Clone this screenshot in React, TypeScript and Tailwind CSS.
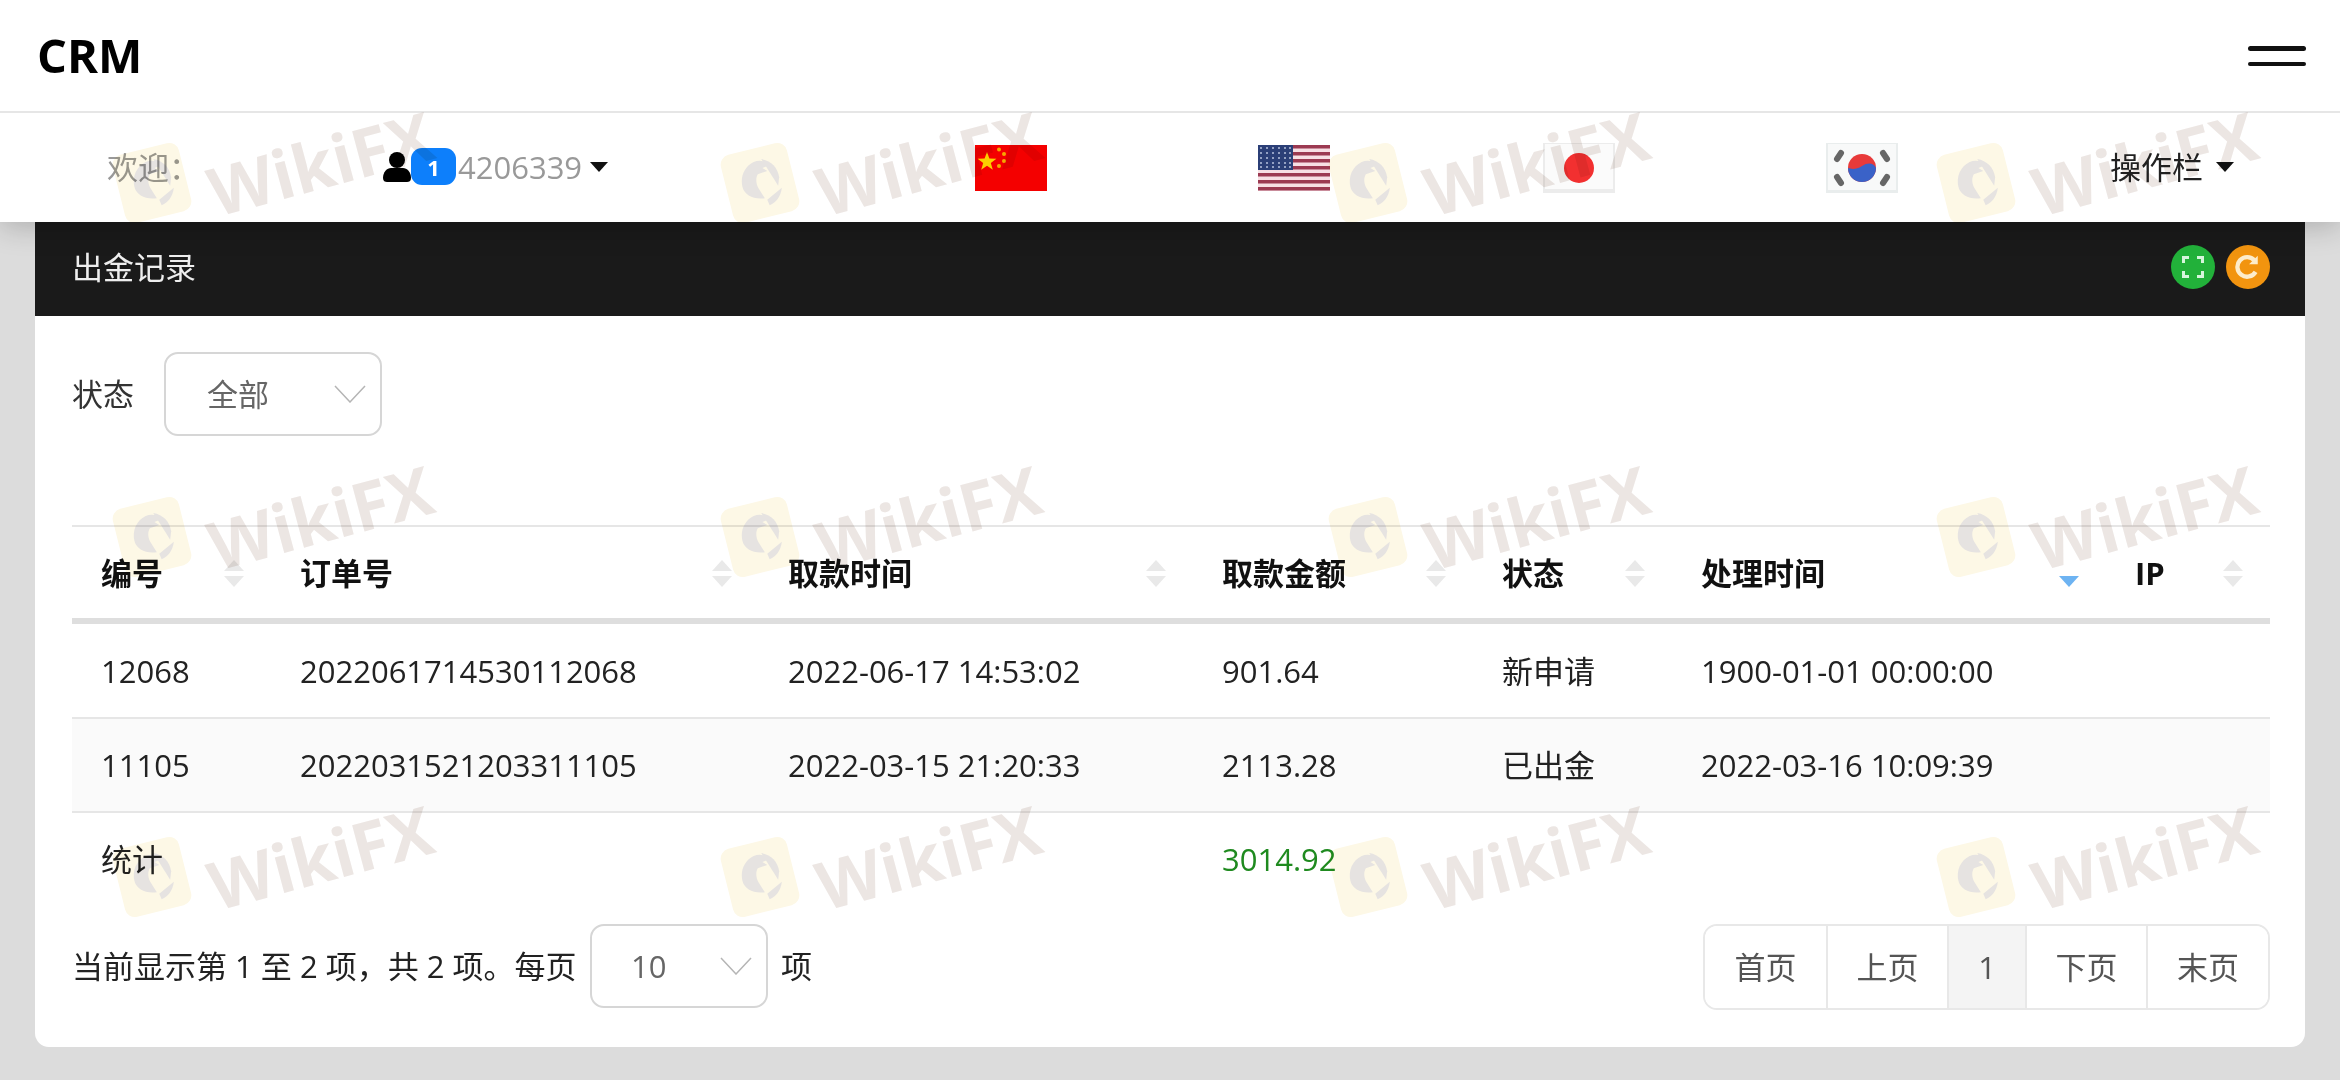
import React from "react";

const COLUMNS = [
  { label: "编号", width: "w-[199px]" },
  { label: "订单号", width: "w-[488px]" },
  { label: "取款时间", width: "w-[434px]" },
  { label: "取款金额", width: "w-[280px]" },
  { label: "状态", width: "w-[199px]" },
  { label: "处理时间", width: "w-[434px]", sorted: true },
  { label: "IP", width: "w-[164px]" },
];

const ROWS = [
  ["12068", "2022061714530112068", "2022-06-17 14:53:02", "901.64", "新申请", "1900-01-01 00:00:00", ""],
  ["11105", "2022031521203311105", "2022-03-15 21:20:33", "2113.28", "已出金", "2022-03-16 10:09:39", ""],
];

const PAGES = [
  { label: "首页", width: "w-[121px]" },
  { label: "上页", width: "w-[121px]" },
  { label: "1", width: "w-[78px]", active: true },
  { label: "下页", width: "w-[121px]" },
  { label: "末页", width: "w-[122px]" },
];

function Caret() {
  return (
    <svg viewBox="0 0 18 10" className="h-[10px] w-[18px] shrink-0">
      <path d="M0 0h18L9 10z" fill="#111" />
    </svg>
  );
}

function Chevron() {
  return (
    <svg viewBox="0 0 32 18" className="h-[18px] w-[32px] shrink-0" fill="none" stroke="#b5b5b5" strokeWidth="1.500">
      <path d="M1 1l15 16L31 1" />
    </svg>
  );
}

function SortArrows({ sorted }: { sorted?: boolean }) {
  return (
    <svg viewBox="0 0 20 27" className="mt-[1px] h-[27px] w-[20px] shrink-0">
      {!sorted && <path d="M10 0l10 11H0z" fill="#e9e9e9" />}
      <path d="M0 16h20L10 27z" fill={sorted ? "#6db3f2" : "#e9e9e9"} />
    </svg>
  );
}

function FlagChina() {
  return (
    <svg viewBox="0 0 72 46" className="h-[46px] w-[72px]">
      <rect width="72" height="46" fill="#f40000" />
      <path d="M12 7l2.400 6.600 7 .2-5.600 4.200 2 6.800-5.800-4-5.800 4 2-6.800-5.600-4.200 7-.2z" fill="#fbd000" />
      <circle cx="24" cy="4.500" r="2" fill="#f6a800" />
      <circle cx="29" cy="9" r="2" fill="#f6a800" />
      <circle cx="29" cy="16" r="2" fill="#f6a800" />
      <circle cx="24" cy="21" r="2" fill="#f6a800" />
    </svg>
  );
}

function FlagUs() {
  const stripes = [0, 7, 14, 21, 28, 35, 42];
  return (
    <svg viewBox="0 0 72 46" className="h-[46px] w-[72px]">
      <rect width="72" height="46" fill="#f7dfe4" />
      {stripes.map((y) => (
        <rect key={y} y={y} width="72" height="3.500" fill="#9c3a52" />
      ))}
      <rect width="35" height="25" fill="#2b3f77" />
      {[3, 8, 13, 18, 22].map((y) =>
        [3, 9, 15, 21, 27, 32].map((x) => <circle key={`${x}-${y}`} cx={x} cy={y} r="1" fill="#b9c3dd" />)
      )}
    </svg>
  );
}

function FlagJapan() {
  return (
    <svg viewBox="0 0 72 50" className="h-[50px] w-[72px]">
      <rect width="72" height="50" fill="#ececec" />
      <rect x="2" y="1" width="68" height="45" fill="#fbfbfb" />
      <circle cx="36" cy="25" r="15" fill="#f23030" />
    </svg>
  );
}

function FlagKorea() {
  return (
    <svg viewBox="0 0 72 50" className="h-[50px] w-[72px]">
      <rect width="72" height="50" fill="#e9eded" />
      <rect x="2" y="1" width="68" height="46" fill="#f8f9f9" />
      <circle cx="36" cy="25" r="14" fill="#e83a3a" />
      <path d="M22 25a14 14 0 0 0 28 0c-2-5-8-6-14-2s-11 3-14 2z" fill="#3a62c8" />
      <g stroke="#666" strokeWidth="6" strokeLinecap="round">
        <path d="M15 10l-4 6" />
        <path d="M57 10l4 6" />
        <path d="M15 40l-4-6" />
        <path d="M57 40l4-6" />
      </g>
    </svg>
  );
}

function WatermarkLogo() {
  return (
    <svg viewBox="0 0 80 84" className="h-[84px] w-[80px] shrink-0">
      <g transform="rotate(-14 40 42)">
        <rect x="6" y="7" width="68" height="70" rx="10" fill="#fdf8e6" />
        <path d="M22 42c0-11 7-20 17-22 7-1 13 3 15 7l-8 1 4 4-10 1c-3 3-4 8-3 13l4 12c-11-1-19-8-19-16z" fill="#e6e3e1" />
        <path d="M47 19c9 4 14 12 13 22l-3 8-8-24z" fill="#e6e3e1" />
        <path d="M43 60l17-8c-3 8-9 13-16 14z" fill="#e6e3e1" />
      </g>
    </svg>
  );
}

function Watermark() {
  return (
    <div className="flex items-start gap-[18px]">
      <WatermarkLogo />
      <span className="origin-left translate-y-[18px] -rotate-[15deg] text-[67px] leading-none font-bold text-[#ece6e3]">
        WikiFX
      </span>
    </div>
  );
}

function WatermarkLayer() {
  const marks = Array.from({ length: 12 }, (_, i) => i);
  return (
    <div className="pointer-events-none absolute inset-0 z-20 mix-blend-multiply">
      <div className="grid grid-cols-[repeat(4,608px)] grid-rows-[354px_340px_100px] pt-[141px] pl-[112px]">
        {marks.map((i) => (
          <Watermark key={i} />
        ))}
      </div>
    </div>
  );
}

function SelectBox({ value, className }: { value: string; className: string }) {
  return (
    <div className={`flex items-center justify-between rounded-[14px] border-2 border-[#d6d6d6] bg-white text-[#666] ${className}`}>
      <span>{value}</span>
      <Chevron />
    </div>
  );
}

export default function App() {
  return (
    <div className="relative h-[1080px] w-[2340px] overflow-hidden bg-[#dcdcdc] font-['Open_Sans','Noto_Sans_CJK_SC',sans-serif] text-[31px] leading-[40px] text-[#222]">
      {/* top bar */}
      <header className="relative z-[15] flex h-[113px] items-center justify-between border-b-2 border-[#e6e6e6] bg-white pr-[34px] pl-[37px]">
        <span className="text-[47px] leading-none font-bold text-black">CRM</span>
        <div className="flex w-[58px] flex-col gap-[11px]">
          <span className="h-[5px] rounded-full bg-[#111]" />
          <span className="h-[4px] rounded-full bg-[#111]" />
        </div>
      </header>

      {/* welcome bar */}
      <div className="relative z-10 grid h-[109px] grid-cols-[276px_592px_283px_285px_283px_284px_1fr] items-center bg-white pl-[107px] shadow-[0_4px_28px_rgba(0,0,0,0.22)]">
        <span className="-mt-[2px] text-[#999]">欢迎：</span>
        <div className="-mt-[2px] flex items-center">
          <svg viewBox="0 0 28 30" className="h-[30px] w-[28px] shrink-0">
            <circle cx="14" cy="8" r="8" fill="#000" />
            <path d="M0 26c0-6 4-10 8-10h12c4 0 8 4 8 10 0 3-2 4-4 4H4c-2 0-4-1-4-4z" fill="#000" />
          </svg>
          <span className="flex h-[37px] w-[45px] shrink-0 items-center justify-center rounded-[11px] bg-[#0d7ffb] text-[22px] font-bold text-white">
            1
          </span>
          <span className="ml-[2px] text-[#999]">4206339</span>
          <span className="ml-[8px]">
            <Caret />
          </span>
        </div>
        <FlagChina />
        <FlagUs />
        <FlagJapan />
        <FlagKorea />
        <div className="-mt-[2px] flex items-center gap-[13px] text-[#222]">
          <span>操作栏</span>
          <Caret />
        </div>
      </div>

      {/* card */}
      <main className="mx-[35px] overflow-hidden rounded-b-[14px] bg-white">
        <div className="flex h-[94px] items-center justify-between bg-[#1a1a1a] pr-[35px] pb-[4px] pl-[37px]">
          <span className="text-[#eee]">出金记录</span>
          <div className="flex items-center gap-[11px]">
            <span className="flex h-[44px] w-[44px] items-center justify-center rounded-full bg-[#22b13a]">
              <svg viewBox="0 0 22 22" className="h-[22px] w-[22px]" fill="none" stroke="#d6f5dc" strokeWidth="3">
                <path d="M1.500 7V1.500H7M15 1.500h5.500V7M20.500 15v5.500H15M7 20.500H1.500V15" />
              </svg>
            </span>
            <span className="flex h-[44px] w-[44px] items-center justify-center rounded-full bg-[#f2940f]">
              <svg viewBox="0 0 24 24" className="h-[26px] w-[26px]" fill="none" stroke="#fdeccb" strokeWidth="4">
                <path d="M19 16.500A9 9 0 1 1 18 6" />
                <path d="M21 1.500v8h-8z" fill="#fdeccb" stroke="none" />
              </svg>
            </span>
          </div>
        </div>

        <div className="pr-[35px] pl-[37px]">
          {/* filter */}
          <div className="flex h-[209px] items-start gap-[30px] pt-[36px]">
            <span className="mt-[22px] text-[#333]">状态</span>
            <SelectBox value="全部" className="h-[84px] w-[218px] pr-[14px] pl-[41px]" />
          </div>

          {/* table */}
          <table className="w-full table-fixed border-separate border-spacing-0">
            <colgroup>
              {COLUMNS.map((c) => (
                <col key={c.label} className={c.width} />
              ))}
            </colgroup>
            <thead>
              <tr>
                {COLUMNS.map((c) => (
                  <th key={c.label} className="h-[99px] border-t-2 border-b-[6px] border-t-[#e6e6e6] border-b-[#dedede] p-0 text-left font-bold text-[#111]">
                    <div className="flex items-center justify-between pr-[27px] pl-[29px]">
                      <span>{c.label}</span>
                      <SortArrows sorted={c.sorted} />
                    </div>
                  </th>
                ))}
              </tr>
            </thead>
            <tbody>
              {ROWS.map((row, i) => (
                <tr key={row[0]} className={i === 1 ? "bg-[#fafafa]" : ""}>
                  {row.map((cell, j) => (
                    <td key={j} className={`border-b-2 border-[#e6e6e6] p-0 pl-[29px] ${i === 0 ? "h-[95px]" : "h-[94px]"}`}>
                      {cell}
                    </td>
                  ))}
                </tr>
              ))}
              <tr>
                <td className="h-[92px] p-0 pl-[29px]">统计</td>
                <td className="p-0" />
                <td className="p-0" />
                <td className="p-0 pl-[29px] text-[#1f8a1f]">3014.92</td>
                <td className="p-0" />
                <td className="p-0" />
                <td className="p-0" />
              </tr>
            </tbody>
          </table>

          {/* footer */}
          <div className="mt-[19px] flex items-start justify-between pb-[37px]">
            <div className="flex h-[84px] items-center whitespace-pre text-[#222]">
              <span className="w-[518px]">当前显示第 1 至 2 项，共 2 项。每页</span>
              <SelectBox value="10" className="h-[84px] w-[178px] pr-[14px] pl-[39px]" />
              <span className="ml-[13px]">项</span>
            </div>
            <div className="flex h-[86px] overflow-hidden rounded-[14px] border-2 border-[#e8e8e8] text-[#555]">
              {PAGES.map((p, i) => (
                <span
                  key={p.label}
                  className={`flex items-center justify-center ${p.width} ${i > 0 ? "border-l-2 border-[#e8e8e8]" : ""} ${p.active ? "bg-[#f4f4f4]" : "bg-white"}`}
                >
                  {p.label}
                </span>
              ))}
            </div>
          </div>
        </div>
      </main>

      <WatermarkLayer />
    </div>
  );
}
